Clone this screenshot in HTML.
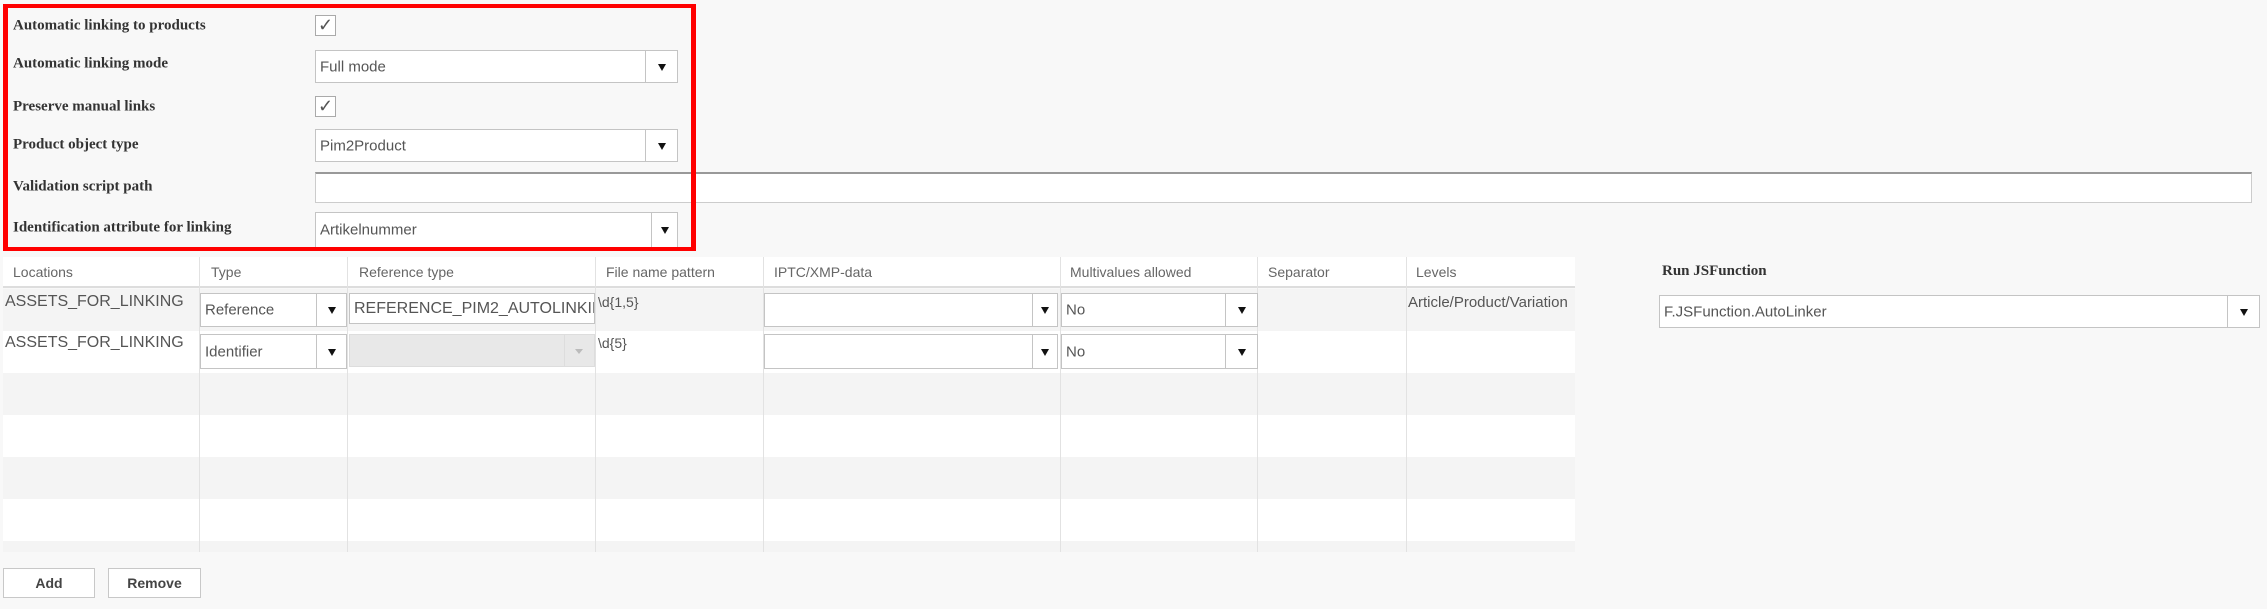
<!DOCTYPE html>
<html><head><meta charset="utf-8"><style>
*{box-sizing:border-box;margin:0;padding:0}
body{width:2267px;height:609px;background:#f8f8f8;position:relative;overflow:hidden;font-family:"Liberation Sans",Arial,sans-serif;color:#555}
.a{position:absolute}
.lbl{position:absolute;left:13px;font-family:"Liberation Serif",serif;font-weight:bold;font-size:15px;color:#333;transform:translateY(-50%)}
.cb{position:absolute;left:315px;width:21px;height:21px;border:1px solid #aaa;background:#fff;font-size:18px;line-height:19px;text-align:center;color:#555}
.sel{position:absolute;background:#fff;border:1px solid #c4c4c4;font-size:15px;color:#555;overflow:hidden;white-space:nowrap}
.sel .t{position:absolute;left:4px;top:50%;transform:translateY(-50%)}
.sel .d{position:absolute;top:0;bottom:0;right:0;border-left:1px solid #c4c4c4;background:#fff}
.sel .d:after{content:"";position:absolute;left:50%;top:50%;margin-left:-4px;margin-top:-3px;border-left:4px solid transparent;border-right:4px solid transparent;border-top:7px solid #111}
.col{position:absolute;top:257px;height:295px;border-left:1px solid #e2e2e2}
.hd{position:absolute;top:264px;font-size:14px;color:#666}
.cell{position:absolute;font-size:16px;color:#555;white-space:nowrap;overflow:hidden}
.btn{position:absolute;top:568px;height:30px;background:#fff;border:1px solid #c8c8c8;font-weight:bold;font-size:14px;color:#444;text-align:center;line-height:28px}
</style></head><body>

<div class="lbl" style="top:26px">Automatic linking to products</div>
<div class="cb" style="top:15px">&#10003;</div>
<div class="lbl" style="top:64px">Automatic linking mode</div>
<div class="sel" style="left:315px;top:50px;width:363px;height:33px"><span class="t">Full mode</span><div class="d" style="width:32px"></div></div>
<div class="lbl" style="top:107px">Preserve manual links</div>
<div class="cb" style="top:96px">&#10003;</div>
<div class="lbl" style="top:145px">Product object type</div>
<div class="sel" style="left:315px;top:129px;width:363px;height:33px"><span class="t">Pim2Product</span><div class="d" style="width:32px"></div></div>
<div class="lbl" style="top:187px">Validation script path</div>
<div class="a" style="left:315px;top:172px;width:1937px;height:31px;background:#fff;border:1px solid #ccc;border-top:2px solid #999"></div>
<div class="lbl" style="top:228px">Identification attribute for linking</div>
<div class="sel" style="left:315px;top:212px;width:363px;height:36px"><span class="t">Artikelnummer</span><div class="d" style="width:26px"></div></div>
<div class="a" style="left:3px;top:4px;width:693px;height:247px;border:5px solid #f00;border-width:4px 5px;z-index:5"></div>

<!-- table -->
<div class="a" style="left:3px;top:257px;width:1572px;height:31px;background:#fff;border-bottom:2px solid #ddd"></div>
<div class="a" style="left:3px;top:289px;width:1572px;height:42px;background:#f4f4f4"></div>
<div class="a" style="left:3px;top:331px;width:1572px;height:42px;background:#fff"></div>
<div class="a" style="left:3px;top:373px;width:1572px;height:42px;background:#f4f4f4"></div>
<div class="a" style="left:3px;top:415px;width:1572px;height:42px;background:#fff"></div>
<div class="a" style="left:3px;top:457px;width:1572px;height:42px;background:#f4f4f4"></div>
<div class="a" style="left:3px;top:499px;width:1572px;height:42px;background:#fff"></div>
<div class="a" style="left:3px;top:541px;width:1572px;height:11px;background:#f4f4f4"></div>
<div class="col" style="left:199px"></div><div class="col" style="left:347px"></div><div class="col" style="left:595px"></div><div class="col" style="left:763px"></div><div class="col" style="left:1060px"></div><div class="col" style="left:1257px"></div><div class="col" style="left:1406px"></div>

<div class="hd" style="left:13px">Locations</div>
<div class="hd" style="left:211px">Type</div>
<div class="hd" style="left:359px">Reference type</div>
<div class="hd" style="left:606px">File name pattern</div>
<div class="hd" style="left:774px">IPTC/XMP-data</div>
<div class="hd" style="left:1070px">Multivalues allowed</div>
<div class="hd" style="left:1268px">Separator</div>
<div class="hd" style="left:1416px">Levels</div>

<div class="cell" style="left:5px;top:293px">ASSETS_FOR_LINKING</div>
<div class="cell" style="left:5px;top:334px">ASSETS_FOR_LINKING</div>
<div class="sel" style="left:200px;top:293px;width:147px;height:34px"><span class="t">Reference</span><div class="d" style="width:30px"></div></div>
<div class="sel" style="left:200px;top:334px;width:147px;height:35px"><span class="t">Identifier</span><div class="d" style="width:30px"></div></div>
<div class="sel" style="left:349px;top:293px;width:246px;height:31px;font-size:16px"><span class="t">REFERENCE_PIM2_AUTOLINKING</span></div>
<div class="a" style="left:349px;top:334px;width:246px;height:33px;background:#e8e8e8;border:1px solid #ddd"><div class="a" style="left:214px;top:0;bottom:0;border-left:1px solid #ddd"></div><div class="a" style="left:225px;top:14px;border-left:4px solid transparent;border-right:4px solid transparent;border-top:5px solid #bbb"></div></div>
<div class="cell" style="left:598px;top:294px;font-size:14px">\d{1,5}</div>
<div class="cell" style="left:598px;top:335px;font-size:14px">\d{5}</div>
<div class="sel" style="left:764px;top:293px;width:294px;height:34px"><div class="d" style="width:25px"></div></div>
<div class="sel" style="left:764px;top:334px;width:294px;height:35px"><div class="d" style="width:25px"></div></div>
<div class="sel" style="left:1061px;top:293px;width:197px;height:34px"><span class="t">No</span><div class="d" style="width:32px"></div></div>
<div class="sel" style="left:1061px;top:334px;width:197px;height:35px"><span class="t">No</span><div class="d" style="width:32px"></div></div>
<div class="cell" style="left:1408px;top:294px;width:166px;font-size:15px">Article/Product/Variation</div>

<div class="a" style="left:1662px;top:263px;font-family:'Liberation Serif',serif;font-weight:bold;font-size:15px;color:#333">Run JSFunction</div>
<div class="sel" style="left:1659px;top:295px;width:601px;height:33px"><span class="t">F.JSFunction.AutoLinker</span><div class="d" style="width:32px"></div></div>

<div class="btn" style="left:3px;width:92px">Add</div>
<div class="btn" style="left:108px;width:93px">Remove</div>
</body></html>
